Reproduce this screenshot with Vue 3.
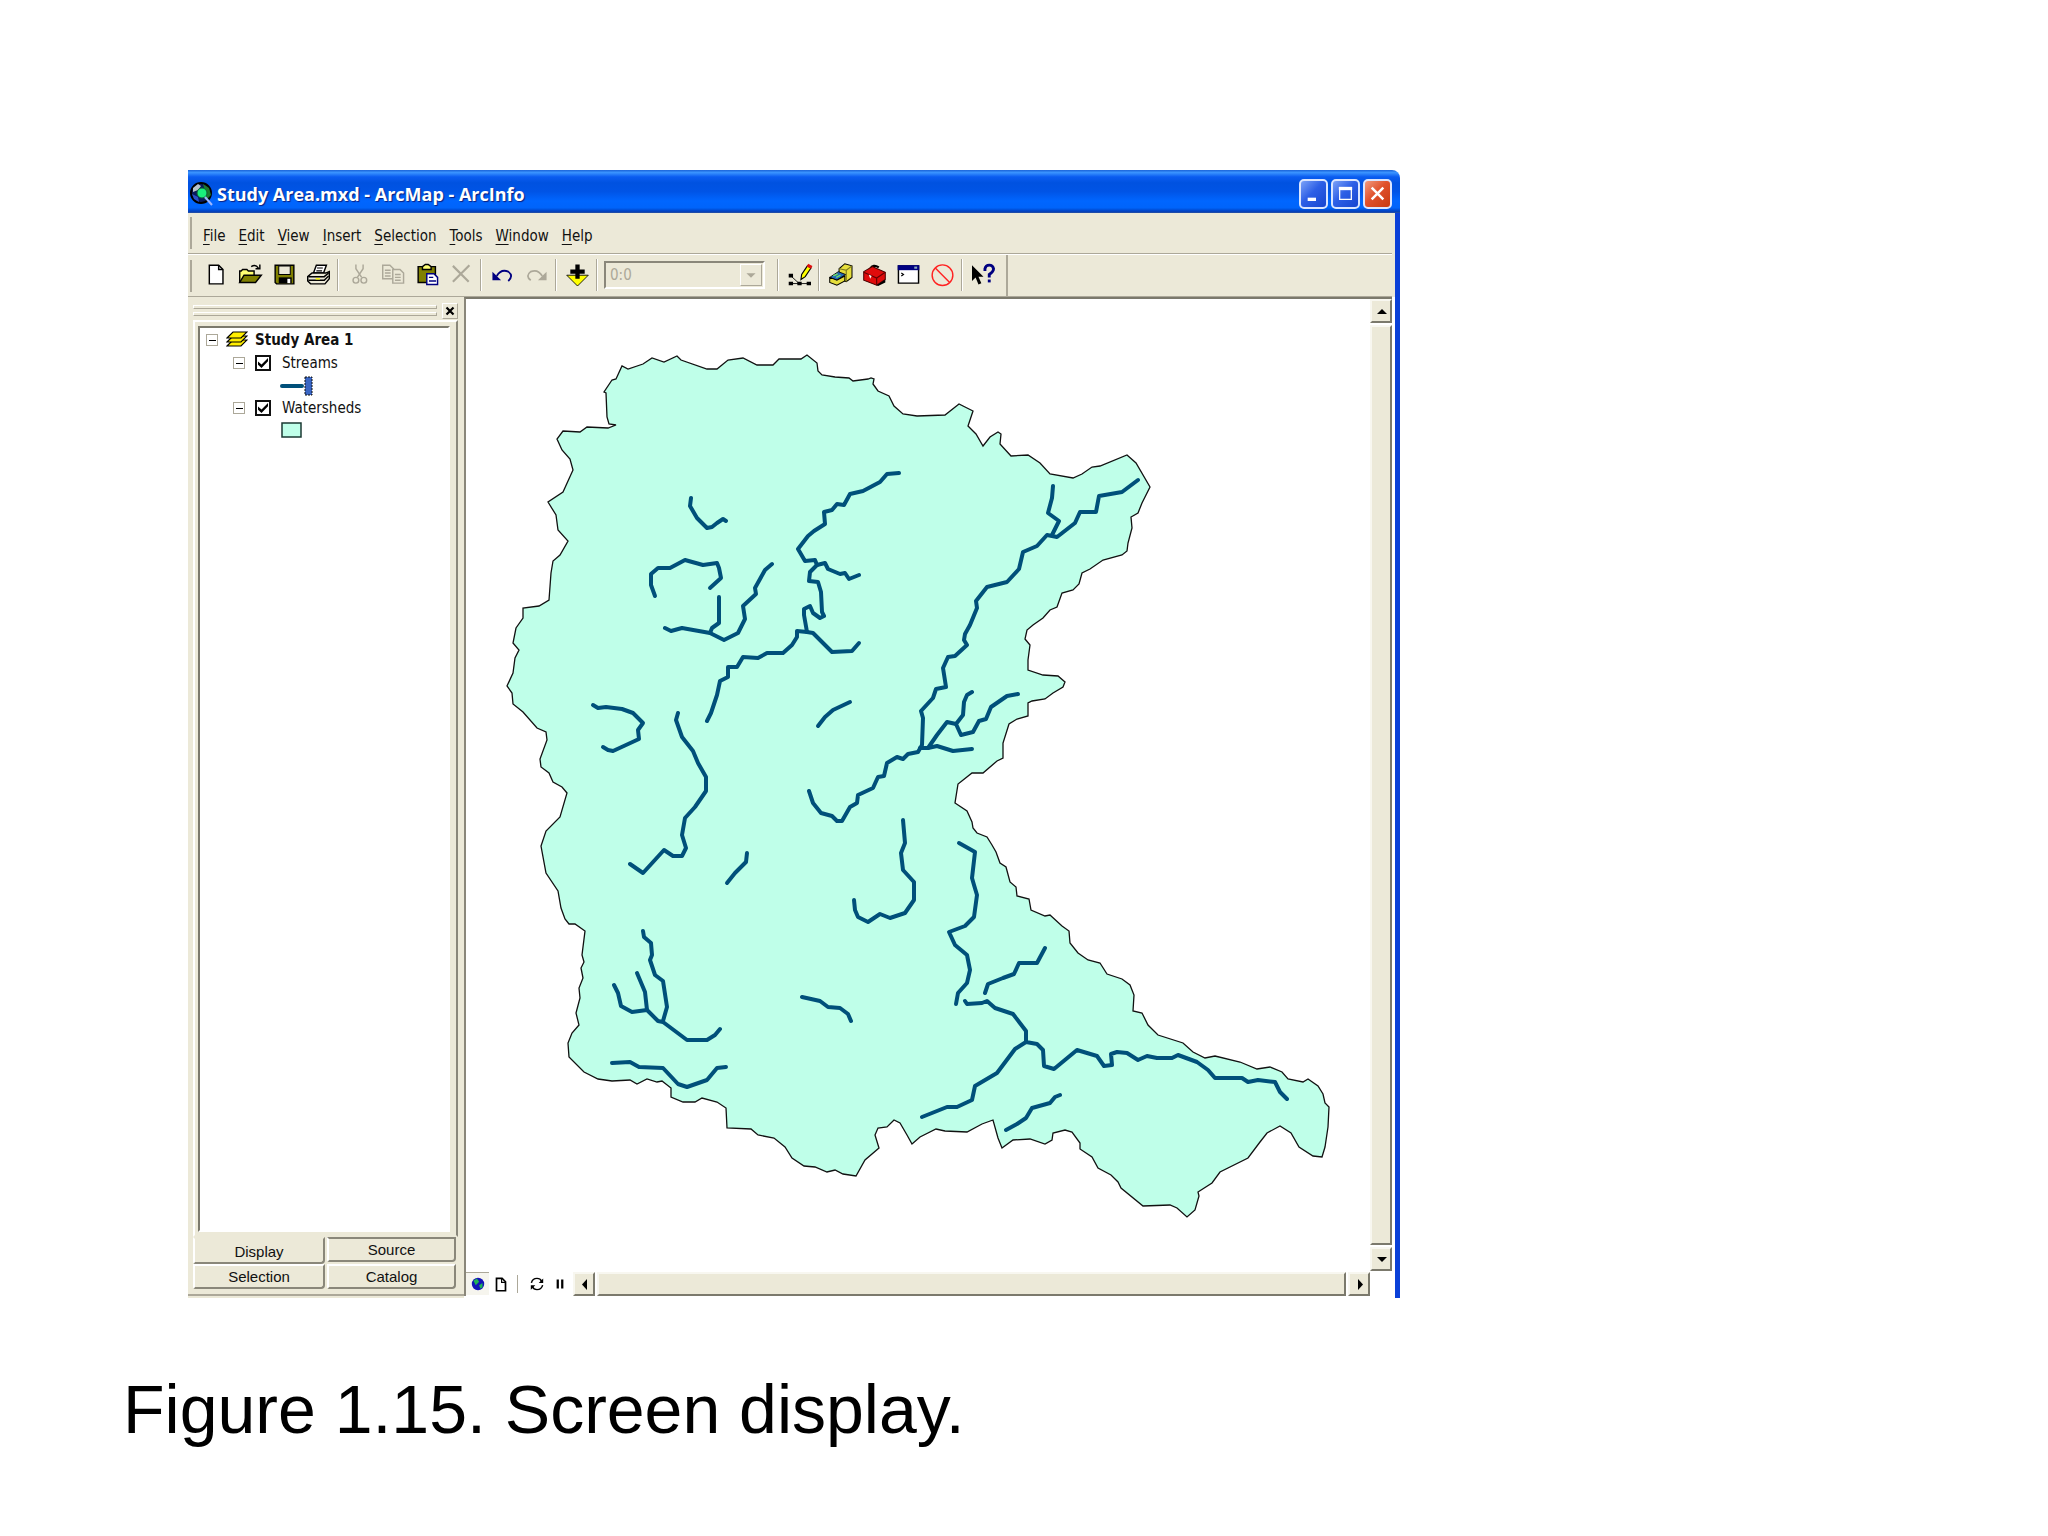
<template>
  <main class="page">
    <section class="window">
      <header class="titlebar">
        <svg class="app-icon" viewBox="0 0 24 24">
          <circle cx="11" cy="11" r="10" fill="#0a1a5c" stroke="#000" stroke-width="2" />
          <path d="M3 6l5-4 3 2-3 4-5 2z" fill="#b8c4cc" />
          <path d="M13 2l6 4 2 7-5 5-3-3 2-6z" fill="#1d7a2c" />
          <path d="M2 12l6 3 1 5-5-3z" fill="#2a50c8" />
          <circle cx="12" cy="11" r="5" fill="#19f07c" stroke="#0d5c3a" />
          <path d="M15 15l7 8" stroke="#9fb8ff" stroke-width="2" />
        </svg>
        <h1>Study Area.mxd - ArcMap - ArcInfo</h1>
        <button class="win-btn" aria-label="Minimize">
          <svg viewBox="0 0 30 30"><path d="M8 20h10v4H8z" fill="#fff" /></svg>
        </button>
        <button class="win-btn" aria-label="Maximize">
          <svg viewBox="0 0 30 30"><path d="M8 9h14v13H8z" fill="none" stroke="#fff" stroke-width="1.5" /><path d="M7 7h16v4H7z" fill="#fff" /></svg>
        </button>
        <button class="win-btn close" aria-label="Close">
          <svg viewBox="0 0 30 30"><path d="M8 8l14 14M22 8L8 22" stroke="#fff" stroke-width="3" /></svg>
        </button>
      </header>

      <div class="body">
        <nav class="menubar">
          <button v-for="item in menus" :key="item"><u>{{ item[0] }}</u>{{ item.slice(1) }}</button>
        </nav>

        <div class="toolbar">
          <div class="tools">
            <button class="tool" aria-label="New">
              <svg viewBox="0 0 16 16"><path d="M3 1.500h6.500l3 3v10H3z" fill="#fff" stroke="#000" /><path d="M9.500 1.500v3h3" fill="none" stroke="#000" /></svg>
            </button>
            <button class="tool" aria-label="Open">
              <svg viewBox="0 0 16 16">
                <path d="M.5 13.500v-8h1l1-1h3l1 1h4v3" fill="#ffff73" stroke="#000" />
                <path d="M.5 13.500l3-5h12l-4 5z" fill="#808000" stroke="#000" />
                <path d="M8.500 2.500q3-2 5 1M14.500 1v3h-3" fill="none" stroke="#000" />
              </svg>
            </button>
            <button class="tool" aria-label="Save">
              <svg viewBox="0 0 16 16">
                <path d="M1.500 1.500h13v13h-12l-1-1z" fill="#808000" stroke="#000" />
                <path d="M4 2h8v6H4z" fill="#ece9d8" stroke="#000" stroke-width=".7" />
                <path d="M4 10h9v4H4z" fill="#000" /><path d="M10 11h2v3h-2z" fill="#fff" />
              </svg>
            </button>
            <button class="tool" aria-label="Print">
              <svg viewBox="0 0 16 16">
                <path d="M4.500 7l2-5.500h7l-2 5.500z" fill="#fff" stroke="#000" />
                <path d="M7 3.500h4M6.500 5.500h4" stroke="#000" stroke-width=".8" />
                <path d="M.5 9.500l3-2.500h9.500l2.500-1v5l-3 3.500h-10l-2-2z" fill="#ece9d8" stroke="#000" />
                <path d="M1 9.500h11l3-2.500M1 12h11l3-3" fill="none" stroke="#000" />
                <path d="M6 11h3" stroke="#ffff00" />
              </svg>
            </button>
            <i class="sep"></i>
            <button class="tool" aria-label="Cut" disabled>
              <svg viewBox="0 0 16 16" fill="none" stroke="#aca899">
                <path d="M5.500 1v3l4 6M10.500 1v3l-4 6" /><circle cx="5.500" cy="12" r="2" /><circle cx="11" cy="12" r="2" />
              </svg>
            </button>
            <button class="tool" aria-label="Copy" disabled>
              <svg viewBox="0 0 16 16" fill="#ece9d8" stroke="#aca899">
                <path d="M.5 1.500h5l2.500 2.500v7H.5z" /><path d="M2 5h4M2 7h4M2 9h4" />
                <path d="M7.500 4.500h5l2.500 2.500v7H7.500z" /><path d="M9 8h4M9 10h4M9 12h4" />
              </svg>
            </button>
            <button class="tool" aria-label="Paste">
              <svg viewBox="0 0 16 16">
                <path d="M1.500 2.500h12v11h-12z" fill="#808000" stroke="#000" />
                <path d="M4.500 4.500v-2l2-1.500h2l2 1.500v2z" fill="#ffff73" stroke="#000" />
                <path d="M7.500 7.500h5l2.500 2.500v5H7.500z" fill="#fff" stroke="#000080" />
                <path d="M9 10h3M9 12.500h5" stroke="#000080" />
              </svg>
            </button>
            <button class="tool" aria-label="Delete" disabled>
              <svg viewBox="0 0 16 16"><path d="M2 2l11 11M13.500 1.500L2 13" stroke="#aca899" stroke-width="1.500" /></svg>
            </button>
            <i class="sep"></i>
            <button class="tool" aria-label="Undo">
              <svg viewBox="0 0 16 16"><path d="M1 6v6h6z" fill="#000080" /><path d="M4 9q3-5 8-3q4 3 0 6.500" fill="none" stroke="#000080" stroke-width="1.300" /></svg>
            </button>
            <button class="tool" aria-label="Redo" disabled>
              <svg viewBox="0 0 16 16"><path d="M15 6v6H9z" fill="#aca899" /><path d="M12 9q-3-5-8-3q-4 3 0 6" fill="none" stroke="#aca899" stroke-width="1.200" /></svg>
            </button>
            <i class="sep"></i>
            <button class="tool" aria-label="Add Data">
              <svg viewBox="0 0 16 16"><path d="M.5 8.500h15L8 16z" fill="#ffff00" stroke="#000" stroke-width=".6" /><path d="M6.500 1h3v3.500H13v3H9.500V11h-3V7.500H3v-3h3.500z" /></svg>
            </button>
            <i class="sep"></i>
            <div class="scale">
              <select aria-label="Map scale" disabled><option>0:0</option></select>
              <svg viewBox="0 0 22 22"><path d="M6 9h10l-5 5z" fill="#aca899" /></svg>
            </div>
            <i class="sep"></i>
            <button class="tool" aria-label="Editor">
              <svg viewBox="0 0 16 16">
                <path d="M2 9l6 5.500" fill="none" stroke="#000" stroke-width=".6" />
                <path d="M2 14.300h12" stroke="#000" stroke-width=".6" />
                <path d="M.5 7.500h3v2.500h-3zM.5 13h3v2.500h-3zM6.500 13h3v2.500h-3zM13 13h3v2.500h-3z" />
                <path d="M9 11.500l.5-3.500 4-6 2.500 1.500-4 6z" fill="#ffff00" stroke="#000" stroke-width=".8" />
                <path d="M13 2.500l1-2 3 1.500-1 2z" fill="#e01010" />
              </svg>
            </button>
            <i class="sep"></i>
            <button class="tool" aria-label="ArcCatalog">
              <svg viewBox="0 0 16 16">
                <path d="M7 4l4-3.500L16 2v8l-4 3-5-2z" fill="#e6de3c" stroke="#000" stroke-width=".7" />
                <path d="M7 4l5 1v8M12 5l4-3" fill="none" stroke="#7d7a20" stroke-width=".8" />
                <path d="M.5 10l6-4 5 2-6 4z" fill="#2367b8" stroke="#000" stroke-width=".6" />
                <path d="M.5 10l5 2 5.500-3v3.500l-5.500 3-5-2z" fill="#e6de3c" stroke="#000" stroke-width=".7" />
                <path d="M3 9l3-1.500M5 10l3-1.500" stroke="#6be06b" />
              </svg>
            </button>
            <button class="tool" aria-label="ArcToolbox">
              <svg viewBox="0 0 16 16">
                <path d="M5 4q2-3.500 6-1" fill="none" stroke="#000" stroke-width="1.500" />
                <path d="M.5 6l6-3.500 9 4v5l-6 4L.5 12z" fill="#e00b0b" stroke="#400" stroke-width=".7" />
                <path d="M.5 6.500l9 4 6-4M9.500 10.500v5" fill="none" stroke="#600" stroke-width=".8" />
                <path d="M4 8l2 1-1 2z" fill="#fff" /><path d="M9.500 15.500l6-4v2l-5 2.500z" />
              </svg>
            </button>
            <button class="tool" aria-label="Command Line">
              <svg viewBox="0 0 16 16"><path d="M1 2h14v12H1z" fill="#fff" stroke="#000" /><path d="M.5 1.500h15V5H.5z" fill="#000080" /><path d="M12 2.500h2v1.500h-2z" fill="#8ab" /><path d="M3 7l1.500 1L3 9" fill="none" stroke="#000" stroke-width=".8" /></svg>
            </button>
            <button class="tool" aria-label="Stop">
              <svg viewBox="0 0 16 16"><circle cx="8" cy="8.500" r="7.200" fill="none" stroke="#f22" /><path d="M3 3.500l10 10" stroke="#f22" /></svg>
            </button>
            <i class="sep"></i>
            <button class="tool" aria-label="What's This?">
              <svg viewBox="0 0 16 16">
                <path d="M0 1.500v11l2.500-2.500 2 5 2-1-2-4.500H8z" />
                <path d="M9 5.500V4q.5-2.500 3-2.500t3 2.500q0 2-3 4v2" fill="none" stroke="#000080" stroke-width="2" /><path d="M11 11.500h2v2h-2z" fill="#000080" />
              </svg>
            </button>
          </div>
        </div>

        <div class="content">
          <aside class="toc">
            <div class="toc-head">
              <div class="grip"><i></i><i></i></div>
              <button class="toc-close" aria-label="Close table of contents">
                <svg viewBox="0 0 16 16"><path d="M4 4l8 8M12 4l-8 8" stroke="#000" stroke-width="2.500" /></svg>
              </button>
            </div>
            <div class="tree-frame">
              <div class="tree">
                <div class="row">
                  <button class="toggle" aria-label="Collapse"></button>
                  <svg class="layers" viewBox="0 0 22 18">
                    <path v-for="y in [10, 6, 2]" :key="y" :d="`M1 ${y + 5}L7 ${y - 1}H21L15 ${y + 5}z`" fill="#ffee00" stroke="#000" stroke-width="1.200" />
                  </svg>
                  <strong>Study Area 1</strong>
                </div>
                <template v-for="layer in layers" :key="layer.name">
                  <div class="row child">
                    <button class="toggle" aria-label="Collapse"></button>
                    <input :id="layer.name" v-model="layer.visible" type="checkbox" />
                    <label :for="layer.name">{{ layer.name }}</label>
                  </div>
                  <div class="row symbol">
                    <svg v-if="layer.kind === 'line'" viewBox="0 0 34 22">
                      <path d="M2 11h20" stroke="#00507a" stroke-width="4" stroke-linecap="round" />
                      <path d="M25 2h7v18h-7z" fill="#3a66c4" stroke="#111" stroke-dasharray="2 1" />
                    </svg>
                    <svg v-else viewBox="0 0 34 22"><path d="M2 3h19v14H2z" fill="#bfffe9" stroke="#1b3a33" stroke-width="1.500" /></svg>
                  </div>
                </template>
              </div>
            </div>
            <div class="tabs">
              <button
                v-for="tab in tabs"
                :key="tab"
                :class="{ active: tab === activeTab }"
                @click="activeTab = tab"
              >{{ tab }}</button>
            </div>
          </aside>

          <div class="view">
            <svg class="map" viewBox="466 299 904 972">
              <polygon :points="watershed" fill="#bfffe9" stroke="#111" stroke-width="1.300" />
              <polyline v-for="(line, i) in streams" :key="i" :points="line" class="stream" />
            </svg>
            <div class="vscroll">
              <button aria-label="Scroll up"><svg viewBox="0 0 20 20"><path d="M5 13h10l-5-5z" /></svg></button>
              <div class="thumb"></div>
              <button aria-label="Scroll down"><svg viewBox="0 0 20 20"><path d="M5 8h10l-5 5z" /></svg></button>
            </div>
            <div class="statusbar">
              <button class="mode active" aria-label="Data View">
                <svg viewBox="0 0 16 16"><circle cx="8" cy="8" r="5.500" fill="#1414b8" /><path d="M4 5l3-2 2 3-3 3zM9 9l3-2v4l-2 1z" fill="#20b455" /></svg>
              </button>
              <button class="mode" aria-label="Layout View">
                <svg viewBox="0 0 16 16"><path d="M4 3h5l3 3v8H4z" fill="none" stroke="#000" stroke-width="1.500" /><path d="M8.500 3v3.500H12" fill="none" stroke="#000" /></svg>
              </button>
              <i class="sep"></i>
              <button class="mode" aria-label="Refresh">
                <svg viewBox="0 0 16 16"><path d="M3 7q1-4 5-4 3 0 4 2.500M13 9q-1 4-5 4-3 0-4-2.500" fill="none" stroke="#000" stroke-width="1.300" /><path d="M13.500 3v4h-4zM2.500 13V9h4z" /></svg>
              </button>
              <button class="mode" aria-label="Pause drawing">
                <svg viewBox="0 0 16 16"><path d="M5 4h2v8H5zM9 4h2v8H9z" /></svg>
              </button>
              <div class="hscroll">
                <button aria-label="Scroll left"><svg viewBox="0 0 20 20"><path d="M12 5v11l-5-5.500z" /></svg></button>
                <div class="thumb"></div>
                <button aria-label="Scroll right"><svg viewBox="0 0 20 20"><path d="M8 5v11l5-5.500z" /></svg></button>
              </div>
            </div>
          </div>
        </div>
      </div>
    </section>
    <p class="caption">Figure 1.15. Screen display.</p>
  </main>
</template>

<script setup>
import { ref } from 'vue';

const menus = ['File', 'Edit', 'View', 'Insert', 'Selection', 'Tools', 'Window', 'Help'];
const tabs = ['Display', 'Source', 'Selection', 'Catalog'];
const activeTab = ref('Display');

const layers = ref([
  { name: 'Streams', kind: 'line', visible: true },
  { name: 'Watersheds', kind: 'fill', visible: true }
]);

// basin boundary, clockwise from the north west notch
const watershed = `
616,425 609,424 607,417 606,393 604,392 612,380 616,379 622,366 628,369 643,364 652,358 664,362 677,356 681,360
707,369 717,369 728,360 743,358 757,365 773,365 779,359 801,359 807,355 817,363 818,371 822,375 835,377 849,378
853,381 868,379 871,378 874,379 873,384 878,391 889,396 894,406 903,414 917,416 945,415 959,404 973,411 968,426
976,434 983,446 990,437 998,432 1001,434 1000,444 1011,456 1028,455 1040,463 1050,474 1073,478 1082,474 1092,467
1100,466 1127,455 1136,463 1150,487 1142,503 1138,513 1131,517 1132,528 1128,543 1127,551 1122,555 1103,560
1090,569 1082,573 1079,584 1073,590 1062,593 1057,607 1050,610 1043,618 1033,625 1027,630 1025,639 1030,645
1028,660 1028,670 1043,675 1058,676 1065,682 1063,687 1053,693 1045,699 1032,701 1028,703 1028,716 1017,719
1009,724 1003,743 1003,758 997,761 983,773 972,773 958,784 955,803 967,811 972,822 973,828 977,833 987,837
992,845 996,852 1000,863 1006,867 1010,882 1016,887 1017,896 1029,899 1031,910 1045,916 1050,915 1062,926
1069,931 1070,943 1078,953 1088,960 1100,963 1107,974 1122,979 1130,985 1134,995 1133,1011 1142,1013 1148,1025
1158,1035 1183,1043 1193,1052 1205,1058 1215,1056 1240,1062 1257,1069 1270,1067 1282,1072 1288,1079 1303,1082
1308,1079 1318,1086 1323,1094 1325,1103 1329,1107 1328,1127 1325,1147 1322,1157 1313,1156 1299,1147 1291,1133
1280,1126 1267,1133 1260,1142 1248,1158 1220,1172 1212,1183 1198,1192 1199,1196 1195,1210 1187,1217 1177,1208
1170,1205 1143,1206 1121,1188 1118,1182 1111,1175 1098,1168 1092,1157 1080,1149 1080,1143 1072,1132 1065,1130
1053,1133 1052,1140 1045,1144 1030,1139 1013,1140 1002,1148 998,1138 993,1120 982,1124 967,1132 945,1131
936,1129 920,1137 912,1144 907,1135 900,1123 894,1120 887,1127 878,1128 875,1135 879,1148 865,1160 856,1176
843,1174 835,1170 827,1172 815,1167 804,1166 792,1158 785,1147 774,1138 758,1135 751,1129 727,1128 726,1108
717,1102 702,1098 695,1102 683,1102 671,1097 671,1088 662,1081 657,1082 647,1079 637,1084 630,1080 612,1081
598,1079 584,1072 569,1057 568,1043 572,1033 579,1025 576,1013 580,998 579,988 583,978 581,968 584,962 582,955
585,931 575,924 569,924 565,919 561,908 558,891 546,873 541,846 546,831 560,817 567,793 562,787 553,782 549,773
541,767 540,759 547,740 546,732 537,728 523,712 513,704 512,693 507,686 513,673 515,658 519,650 513,643 516,628
523,618 523,608 539,606 549,600 551,573 553,561 560,555 568,541 558,530 556,515 548,502 563,492 573,470 570,459
562,450 557,439 563,431 580,432 587,427 608,428`;

const streams = [
  '691,498 690,506 697,518 707,528 712,527 717,523 723,519 726,521',
  '655,596 651,585 651,574 658,568 670,568 685,560 703,565 717,563 719,568 721,578 710,588',
  '719,597 719,623 712,628 710,633',
  '665,628 671,631 682,628 710,633 724,640 738,633 743,623 745,619 743,606 756,594 755,588 765,570 772,564',
  '899,473 887,474 880,482 863,491 850,494 844,505 837,504 832,510 824,512 825,524 814,531 808,536 798,549 805,561 815,560 817,565 825,563 828,569 840,574 845,573 849,579 859,575',
  '817,565 810,572 809,581 818,582 821,592 822,612 824,616 820,618 813,613 810,606 804,609 804,615 807,632 797,631 797,637 792,645 783,653 767,653 758,658 743,657 737,667 728,667 728,677 720,681 717,695 711,713 707,721',
  '807,632 813,633 832,652 852,651 859,643',
  '593,705 598,708 606,707 622,709 633,713 643,723 638,730 639,739 613,751 608,750 603,747',
  '678,713 676,720 682,737 693,751 698,763 706,777 706,791 695,807 685,818 682,835 686,848 682,856 673,856 664,850 643,873 630,864',
  '850,702 833,710 825,717 818,726',
  '747,853 746,862 735,873 727,883',
  '903,820 905,843 901,853 903,870 914,882 914,900 905,913 890,918 880,914 868,922 858,917 855,910 854,900',
  '809,791 813,803 821,813 832,816 837,821 842,821 850,807 857,803 858,795 873,788 878,777 884,776 887,763 897,757 903,759 908,754 918,752 922,745 923,718 921,711 933,698 936,689 946,687 943,668 948,657 955,656 967,645 964,640 965,634 970,625 977,608 976,601 987,587 1007,582 1019,569 1023,552 1037,546 1047,535 1057,537 1075,523 1080,512 1096,512 1099,496 1122,492 1138,480',
  '1053,486 1052,498 1048,513 1059,521 1052,535',
  '972,692 967,695 964,702 963,715 956,724 961,735 973,732 979,721 986,719 991,707 1007,696 1018,694',
  '956,724 947,722 937,735 928,748 920,748',
  '928,748 937,746 953,751 972,749',
  '959,843 975,852 972,878 974,885 977,895 974,917 965,926 949,932 955,945 967,955 970,970 967,983 958,993 956,1004',
  '1045,948 1037,963 1019,963 1014,974 1003,978 988,984 985,993',
  '965,1001 967,1004 982,1003 987,1001 995,1008 1013,1014 1026,1031 1026,1042 1037,1044 1043,1050 1044,1066 1054,1069 1077,1050 1097,1056 1104,1066 1112,1065 1111,1054 1117,1052 1127,1053 1138,1060 1147,1056 1157,1058 1172,1058 1178,1055 1197,1062 1208,1070 1215,1078 1242,1078 1248,1082 1258,1080 1275,1082 1280,1092 1287,1099',
  '1026,1042 1015,1049 997,1073 975,1086 972,1100 957,1107 947,1107 922,1117',
  '1060,1095 1055,1097 1050,1103 1032,1108 1026,1118 1017,1124 1006,1130',
  '643,931 644,937 651,943 652,955 650,960 655,975 663,981 667,1007 663,1021',
  '637,973 645,992 647,1010',
  '614,985 618,993 621,1006 632,1012 647,1010 658,1021 663,1022 687,1040 707,1040 715,1035 720,1029',
  '612,1063 630,1062 639,1067 663,1068 678,1084 687,1087 707,1080 717,1068 726,1067',
  '802,997 820,1001 828,1007 840,1008 848,1014 851,1021'
];
</script>

<style>
  body {
    margin: 0;
    background: #fff;
  }
</style>

<style scoped>
  * {
    box-sizing: border-box;
  }

  button {
    padding: 0;
    border: none;
    background: none;
    font: inherit;
    color: inherit;
  }

  svg {
    display: block;
  }

  .page {
    padding: 170px 648px 0 188px;
    font-family: "DejaVu Sans Condensed", "DejaVu Sans", sans-serif;
    font-size: 15px;
    color: #111;
  }

  .titlebar {
    display: flex;
    align-items: center;
    gap: 3px;
    height: 43px;
    padding: 4px 8px 0 2px;
    border-radius: 0 8px 0 0;
    background: linear-gradient(#1a63d8 0, #3a94ff 6%, #0a5cf0 16%, #0052e0 30%, #0054e6 50%, #0066ff 72%, #0064fa 88%, #0040c0 96%, #2a50a0 100%);
  }

  .app-icon {
    width: 24px;
    height: 24px;
  }

  .titlebar h1 {
    flex: 1;
    margin: 0;
    font-family: "Open Sans", sans-serif;
    font-size: 18px;
    font-weight: 700;
    line-height: 24px;
    color: #fff;
    text-shadow: 1px 1px 1px #0a1f80;
  }

  .win-btn {
    width: 29px;
    height: 30px;
    border: 2px solid #dbe6ff;
    border-radius: 5px;
    background: linear-gradient(135deg, #7ba2f8, #2d5fe6 45%, #1746d0);
  }

  .win-btn.close {
    background: linear-gradient(135deg, #f09a7e, #e0512c 45%, #c83a10);
  }

  .body {
    padding: 0 3px 2px 0;
    border-right: 5px solid #0a40d8;
    background: #ece9d8;
  }

  .menubar {
    display: flex;
    align-items: center;
    gap: 13px;
    height: 41px;
    padding: 5px 0 0 15px;
    border-bottom: 1px solid #aca899;
  }

  .menubar button {
    line-height: 20px;
  }

  .menubar u {
    text-underline-offset: 3px;
  }

  .toolbar {
    height: 43px;
    border-top: 1px solid #fff;
    border-bottom: 1px solid #aca899;
  }

  .tools {
    display: flex;
    align-items: center;
    width: 820px;
    height: 100%;
    padding: 0 0 2px 11px;
    border-right: 2px solid #aca899;
  }

  .menubar,
  .tools {
    background: linear-gradient(#aca899, #aca899) 2px 50% / 2px 32px no-repeat;
  }

  .tool {
    display: grid;
    flex: none;
    place-items: center;
    width: 34px;
    height: 34px;
  }

  .tool svg {
    width: 23px;
    height: 23px;
    overflow: visible;
  }

  .sep {
    flex: none;
    width: 2px;
    height: 32px;
    margin: 0 3px 0 2px;
    border-left: 1px solid #aca899;
    border-right: 1px solid #fff;
  }

  .scale {
    position: relative;
    width: 161px;
    height: 28px;
    margin: 0 10px 0 3px;
  }

  .scale select {
    width: 100%;
    height: 100%;
    padding: 0 4px;
    border: 2px solid;
    border-color: #8a877a #fff #fff #8a877a;
    border-radius: 0;
    background: #ece9d8;
    color: #aca899;
    font: inherit;
    opacity: 1;
    appearance: none;
  }

  .scale svg {
    position: absolute;
    top: 3px;
    right: 3px;
    width: 22px;
    height: 22px;
    border: 1px solid;
    border-color: #fff #aca899 #aca899 #fff;
  }

  .content {
    display: grid;
    grid-template-columns: 276px 1fr;
    margin-right: -3px;
    margin-bottom: -2px;
    padding: 0 3px 2px 0;
    background: linear-gradient(90deg, #ece9d8 276px, #fff 276px);
  }

  .toc {
    display: flex;
    flex-direction: column;
    padding: 5px 6px 5px 5px;
    border-bottom: 2px solid #aca899;
  }

  .toc-head {
    display: flex;
    align-items: center;
    gap: 5px;
    height: 17px;
  }

  .grip {
    display: grid;
    flex: 1;
    gap: 3px;
  }

  .grip i {
    height: 4px;
    border: 1px solid;
    border-color: #fff #aca899 #aca899 #fff;
  }

  .toc-close {
    width: 16px;
    height: 16px;
    border: 1px solid;
    border-color: #fff #aca899 #aca899 #fff;
  }

  .tree-frame {
    flex: 1;
    display: grid;
    margin-top: 1px;
    padding: 4px 6px 3px 3px;
    border: 2px solid;
    border-color: #fff #8a877a transparent #fff;
  }

  .tree {
    padding: 0 6px;
    border: 2px solid;
    border-color: #7b796c #fff #fff #7b796c;
    background: #fff;
  }

  .row {
    display: flex;
    align-items: center;
    height: 22px;
  }

  .row:first-child {
    height: 24px;
  }

  .layers {
    width: 22px;
    height: 18px;
    margin: 0 7px 0 8px;
  }

  .child {
    padding-left: 27px;
  }

  .child label {
    margin-left: 11px;
  }

  .symbol {
    height: 23px;
    padding-left: 74px;
  }

  .symbol svg {
    width: 34px;
    height: 22px;
  }

  .toggle {
    width: 12px;
    height: 12px;
    border: 1px solid #aca899;
    background: linear-gradient(#000, #000) 50% 50% / 7px 1px no-repeat;
  }

  input[type="checkbox"] {
    display: grid;
    place-items: center;
    width: 16px;
    height: 16px;
    margin: 0 0 0 10px;
    border: 2px solid #111;
    appearance: none;
  }

  input[type="checkbox"]:checked::before {
    content: "";
    width: 10px;
    height: 10px;
    background: #000;
    clip-path: polygon(0 35%, 35% 65%, 100% 0, 100% 32%, 35% 100%, 0 68%);
  }

  .tabs {
    display: grid;
    grid-template-columns: 132px 1fr;
    gap: 0 2px;
    padding-right: 2px;
    font-family: "Liberation Sans", sans-serif;
  }

  .tabs button {
    height: 25px;
    border: 2px solid;
    border-color: #fff #8a877a #8a877a #fff;
    border-radius: 0 0 4px 2px;
    line-height: 20px;
  }

  .tabs button:nth-child(2) {
    border-top-color: #8a877a;
  }

  .tabs .active {
    height: 27px;
    padding-top: 3px;
    border-top-color: transparent;
  }

  .view {
    display: grid;
    grid-template-columns: 1fr 22px;
    border-top: 2px solid #7b796c;
    border-left: 2px solid #8a877a;
    background: #fff;
  }

  .map {
    width: 100%;
  }

  .stream {
    fill: none;
    stroke: #00507a;
    stroke-width: 4;
    stroke-linecap: round;
    stroke-linejoin: round;
  }

  .vscroll {
    display: flex;
    flex-direction: column;
    gap: 2px;
  }

  .vscroll button,
  .hscroll button,
  .thumb {
    border: 2px solid;
    border-color: #f8f7f0 #7b796c #7b796c #f8f7f0;
    background: #ece9d8;
  }

  .vscroll button,
  .hscroll button {
    display: grid;
    flex: none;
    place-items: center;
    width: 22px;
    height: 24px;
  }

  .vscroll svg,
  .hscroll svg {
    width: 20px;
    height: 20px;
  }

  .thumb {
    flex: 1;
  }

  .statusbar {
    display: flex;
    align-items: center;
    height: 25px;
  }

  .mode {
    display: grid;
    place-items: center;
    width: 23px;
    height: 23px;
  }

  .mode.active {
    border-top: 1px solid #aca899;
    background: #f6f5ee;
  }

  .mode svg {
    width: 18px;
    height: 18px;
  }

  .statusbar .sep {
    height: 18px;
    margin: 0 6px 0 5px;
  }

  .hscroll {
    display: flex;
    flex: 1;
    gap: 2px;
    height: 24px;
    margin-left: 2px;
  }

  .caption {
    margin: 65px 0 0 -65px;
    font-family: "Liberation Sans", sans-serif;
    font-size: 68px;
    line-height: 92px;
    color: #000;
    white-space: nowrap;
  }
</style>
